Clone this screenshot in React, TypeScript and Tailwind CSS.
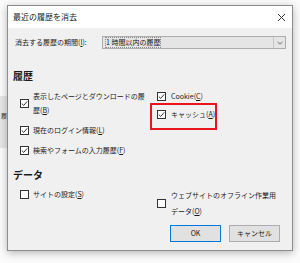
import React from 'react';

const font = { fontFamily: '"Noto Sans CJK JP", "Noto Sans", sans-serif' };

function Key({ k }: { k: string }) {
  return (
    <>
      (<span className="underline underline-offset-1">{k}</span>)
    </>
  );
}

function Box({ checked }: { checked: boolean }) {
  return (
    <span className="flex h-[9px] w-[9px] shrink-0 items-center justify-center border border-[#333] bg-white">
      {checked && (
        <svg width="7" height="7" viewBox="0 0 7 7">
          <path d="M0.8 3.6 L2.7 5.4 L6.2 1.4" fill="none" stroke="#333" strokeWidth="1" />
        </svg>
      )}
    </span>
  );
}

function Check({
  checked,
  children,
  labelClass = '',
  gap = 'gap-[4px]',
}: {
  checked: boolean;
  children: React.ReactNode;
  labelClass?: string;
  gap?: string;
}) {
  return (
    <div className={`flex items-center ${gap}`}>
      <Box checked={checked} />
      <div className={`text-[7px] leading-[14px] text-[#1a1a1a] ${labelClass}`}>{children}</div>
    </div>
  );
}

export default function App() {
  return (
    <div className="relative h-[263px] w-[300px] overflow-hidden bg-[#fbfbfb]" style={font}>
      {/* window behind the dialog */}
      <div className="absolute left-0 top-[96px] h-[52px] w-[10px] bg-[#e6e6e6]">
        <span className="absolute left-[1px] top-[16px] text-[6px] leading-[8px] text-[#333]">履</span>
      </div>

      <div className="relative ml-[7px] mt-[5px] flex h-[246px] w-[286px] flex-col border border-[#8c8c8c] bg-[#f0f0f0] shadow-[0_2px_8px_rgba(0,0,0,0.28)]">
        {/* title bar */}
        <div className="flex h-[22px] items-center justify-between bg-white pl-[5px] pr-[6px]">
          <span className="text-[8px] text-[#222]">最近の履歴を消去</span>
          <svg width="9" height="9" viewBox="0 0 9 9">
            <path d="M1 1 L8 8 M8 1 L1 8" stroke="#333" strokeWidth="1" />
          </svg>
        </div>

        {/* period */}
        <div className="mt-[8px] flex h-[13px] items-center justify-between pl-[7px] pr-[6px]">
          <span className="text-[7px] text-[#1a1a1a]">
            消去する履歴の期間<Key k="I" />:
          </span>
          <div className="flex h-[13px] w-[184px] border border-[#adadad] bg-[#e5e5e5]">
            <div className="flex flex-1 items-center px-[3px]">
              <span className="text-[7px] leading-[9px] text-[#1a1a1a] outline-dotted outline-1 outline-[#8a8a8a]">
                1 時間以内の履歴
              </span>
            </div>
            <div className="flex w-[12px] items-center justify-center border-l border-[#c8c8c8]">
              <svg width="6" height="4" viewBox="0 0 6 4">
                <path d="M0.5 0.8 L3 3.2 L5.5 0.8" fill="none" stroke="#555" strokeWidth="0.8" />
              </svg>
            </div>
          </div>
        </div>

        {/* history */}
        <div className="ml-[5px] mt-[21px] text-[10px] font-bold leading-[12px] text-[#1a1a1a]">履歴</div>
        <div className="mt-[7px] grid grid-cols-[137px_1fr] pl-[12px]">
          <div className="flex flex-col gap-[6px]">
            <Check checked>
              <div>表示したページとダウンロードの履</div>
              <div>
                歴<Key k="B" />
              </div>
            </Check>
            <Check checked>
              現在のログイン情報<Key k="L" />
            </Check>
            <Check checked>
              検索やフォームの入力履歴<Key k="F" />
            </Check>
          </div>
          <div className="flex flex-col gap-[4px]">
            <Check checked gap="gap-[5px]">
              Cookie<Key k="C" />
            </Check>
            <Check checked gap="gap-[5px]">
              キャッシュ<Key k="A" />
            </Check>
          </div>
        </div>

        {/* data */}
        <div className="ml-[5px] mt-[12px] text-[10px] font-bold leading-[12px] text-[#1a1a1a]">データ</div>
        <div className="mt-[6px] grid grid-cols-[137px_1fr] items-start pl-[12px]">
          <Check checked={false}>
            サイトの設定<Key k="S" />
          </Check>
          <Check checked={false} gap="gap-[5px]" labelClass="!leading-[16px]">
            <div>ウェブサイトのオフライン作業用</div>
            <div>
              データ<Key k="O" />
            </div>
          </Check>
        </div>

        {/* buttons */}
        <div className="mt-auto flex justify-end gap-[8px] pb-[8px] pr-[12px]">
          <button className="flex h-[17px] w-[51px] items-center justify-center border border-[#0078d7] bg-[#e1e1e1] text-[7px] text-[#1a1a1a]">
            OK
          </button>
          <button className="flex h-[17px] w-[51px] items-center justify-center border border-[#adadad] bg-[#e1e1e1] text-[7px] text-[#1a1a1a]">
            キャンセル
          </button>
        </div>
      </div>

      {/* red highlight annotation */}
      <div className="absolute left-[150px] top-[103px] h-[27px] w-[67px] border-2 border-[#e8141e]" />
    </div>
  );
}
